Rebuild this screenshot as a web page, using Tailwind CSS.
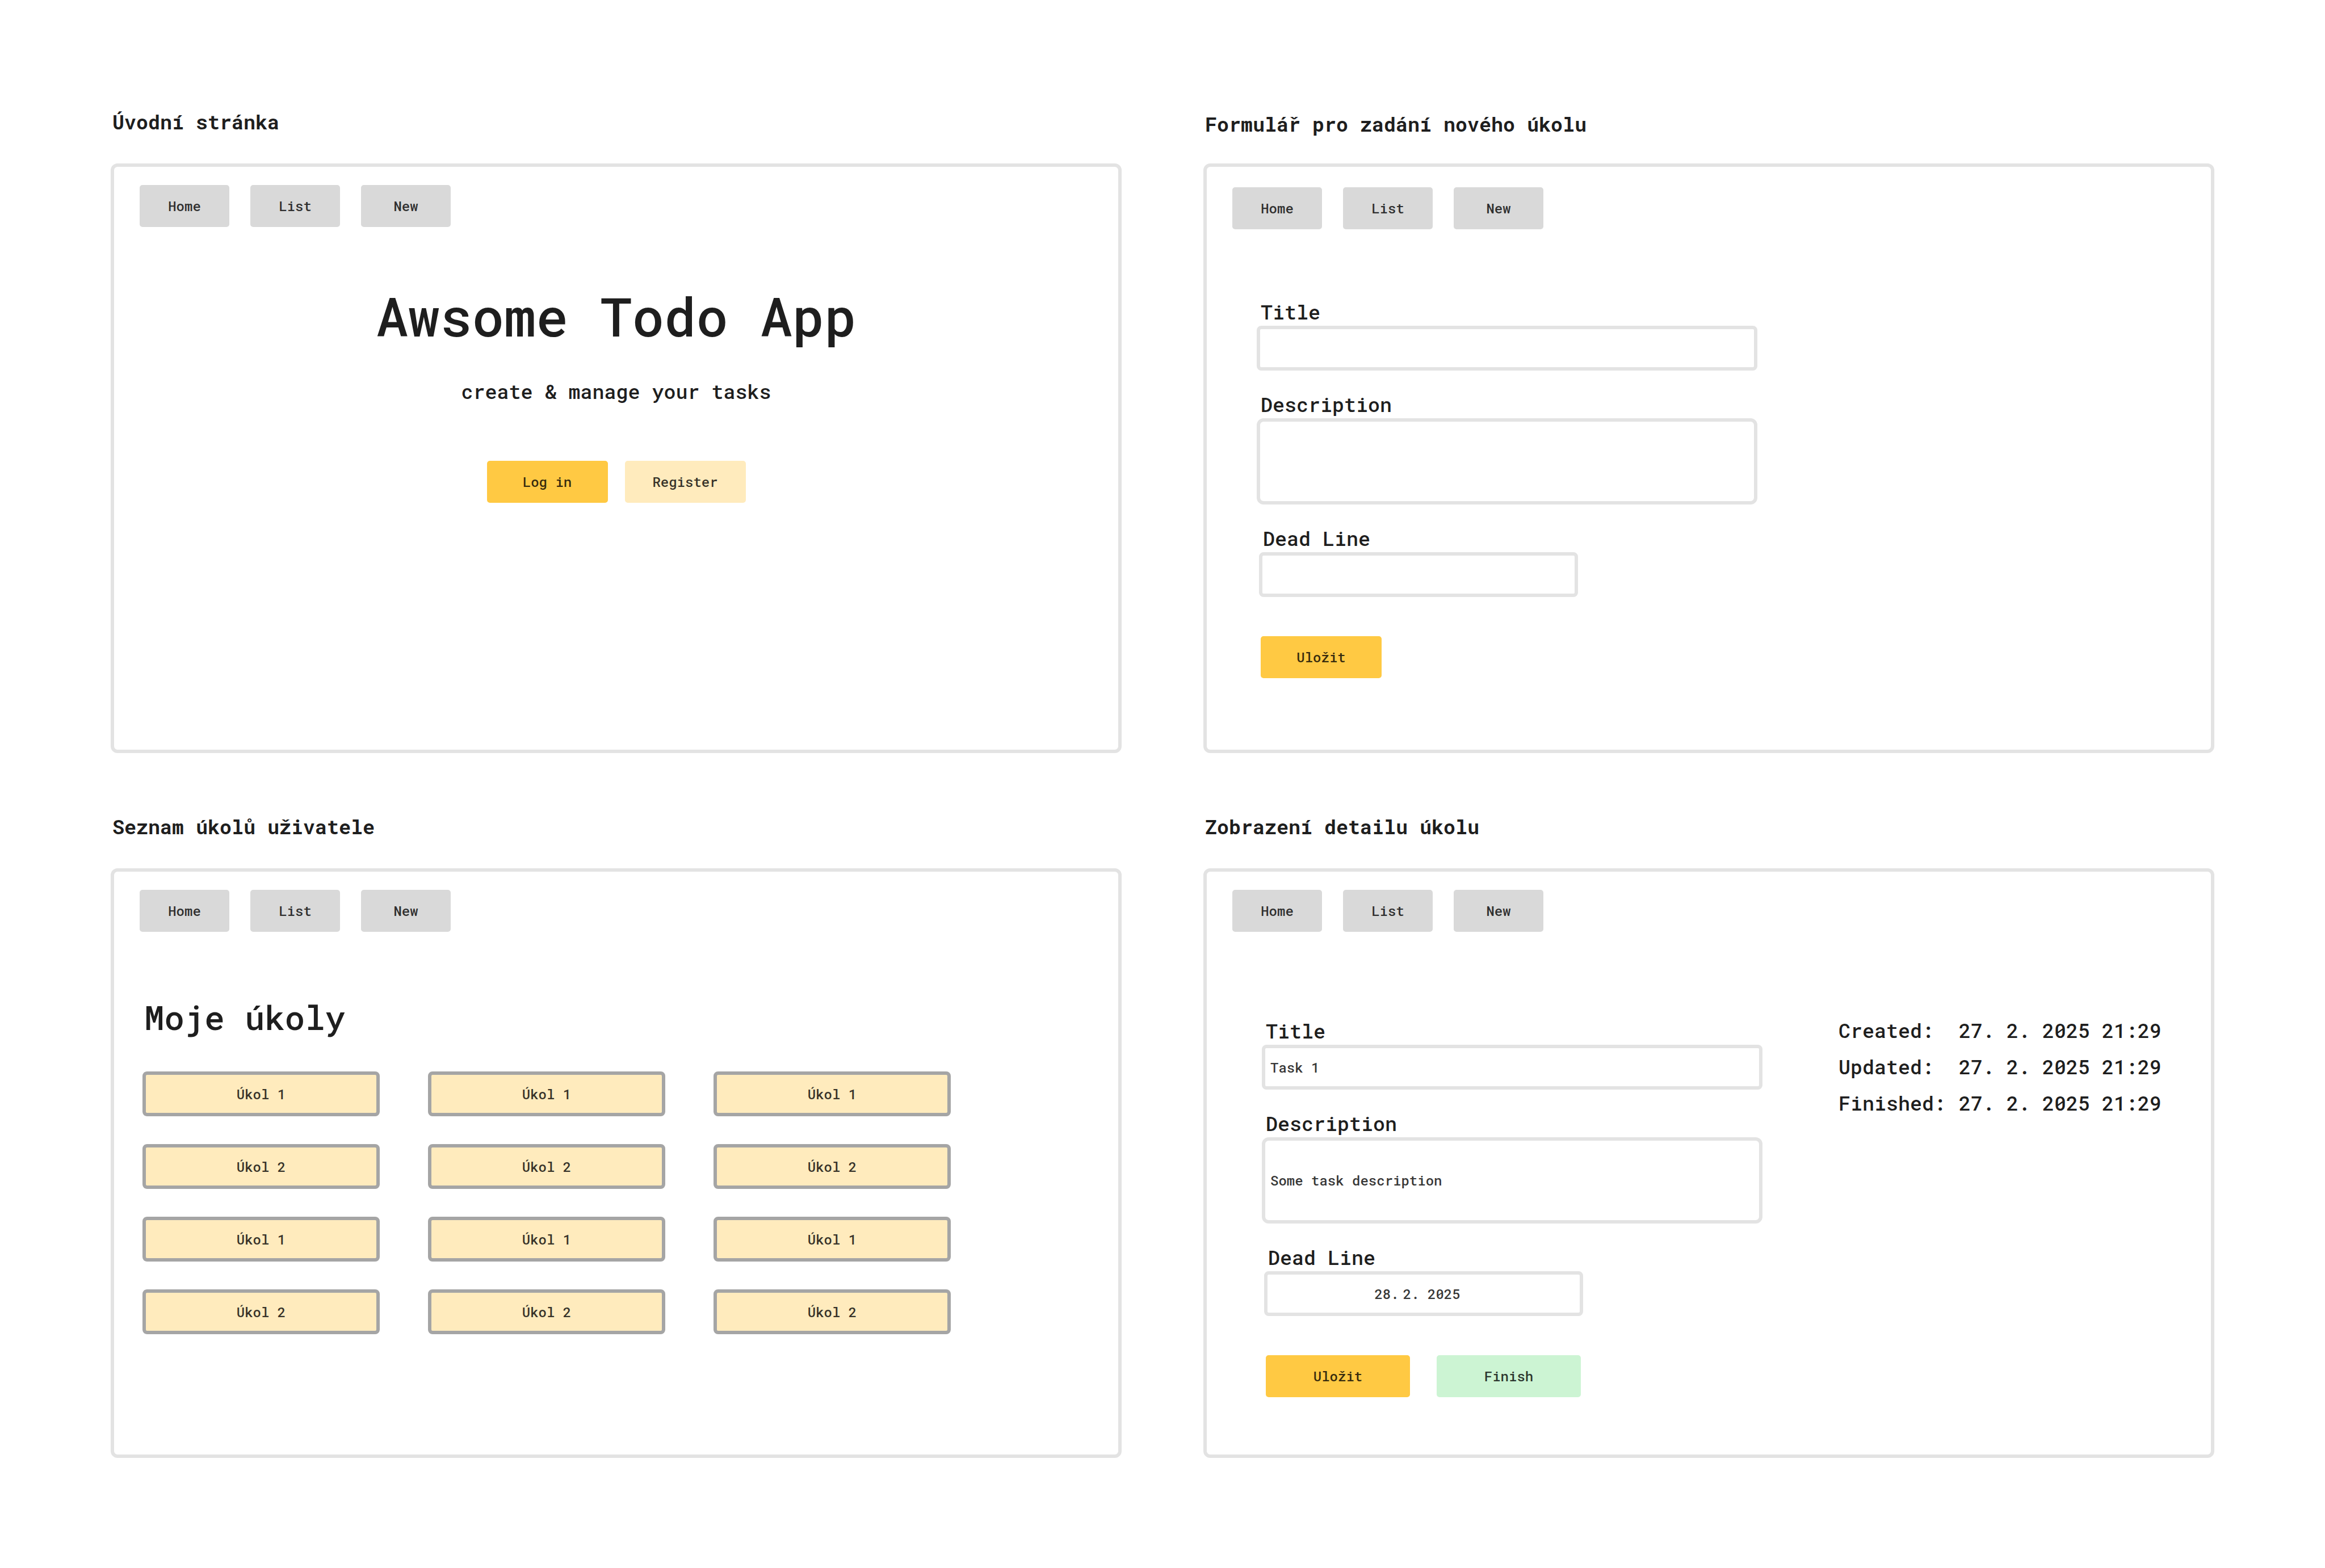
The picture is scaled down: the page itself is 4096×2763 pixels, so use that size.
<!DOCTYPE html>
<html lang="cs">
<head>
<meta charset="utf-8">
<meta name="viewport" content="width=device-width, initial-scale=1">
<title>Awsome Todo App</title>
<script src="https://cdn.jsdelivr.net/npm/@tailwindcss/browser@4"></script>
</head>
<body class="bg-white font-['Roboto_Mono','Noto_Sans',monospace] text-[35px] leading-11 font-medium text-[#1e1e1e]">
<main class="grid grid-cols-2 gap-x-36 gap-y-[105px] px-[195px] pt-[190px] pb-[190px]">

  <!-- Home page -->
  <section>
    <h2 class="mb-[50px] pl-[3px] leading-12 font-bold">Úvodní stránka</h2>
    <div class="min-h-[1039px] rounded-xl border-6 border-[#e3e3e3] px-[45px] pt-8">
      <nav class="flex gap-[37px] text-2xl text-black/80">
        <a href="#home" class="flex h-[74px] w-[158px] items-center justify-center rounded-[5px] bg-[#d9d9d9]">Home</a>
        <a href="#list" class="flex h-[74px] w-[158px] items-center justify-center rounded-[5px] bg-[#d9d9d9]">List</a>
        <a href="#new" class="flex h-[74px] w-[158px] items-center justify-center rounded-[5px] bg-[#d9d9d9]">New</a>
      </nav>
      <div class="flex flex-col items-center pt-[101px]">
        <h1 class="text-[94px] leading-[112px]">Awsome Todo App</h1>
        <p class="mt-[52px] leading-12">create &amp; manage your tasks</p>
        <div class="mt-[99px] flex gap-[30px] text-2xl text-black/80">
          <button type="button" class="h-[74px] w-[213px] rounded-[5px] bg-[#ffc943]">Log in</button>
          <button type="button" class="h-[74px] w-[213px] rounded-[5px] bg-[#ffebbd]">Register</button>
        </div>
      </div>
    </div>
  </section>

  <!-- New task form -->
  <section>
    <h2 class="mb-[46px] pt-1 pl-[3px] leading-12 font-bold">Formulář pro zadání nového úkolu</h2>
    <div class="min-h-[1039px] rounded-xl border-6 border-[#e3e3e3] px-[45px] pt-9">
      <nav class="flex gap-[37px] text-2xl text-black/80">
        <a href="#home" class="flex h-[74px] w-[158px] items-center justify-center rounded-[5px] bg-[#d9d9d9]">Home</a>
        <a href="#list" class="flex h-[74px] w-[158px] items-center justify-center rounded-[5px] bg-[#d9d9d9]">List</a>
        <a href="#new" class="flex h-[74px] w-[158px] items-center justify-center rounded-[5px] bg-[#d9d9d9]">New</a>
      </nav>
      <form class="ml-[43px] flex w-[882px] flex-col gap-[37px] pt-[123px]">
        <div class="flex flex-col gap-[3px]">
          <label for="new-title" class="pl-[7px]">Title</label>
          <input id="new-title" type="text" class="h-[79px] rounded-lg border-6 border-[#e3e3e3] px-[9px] text-2xl text-black/80">
        </div>
        <div class="flex flex-col gap-[3px]">
          <label for="new-description" class="pl-[7px]">Description</label>
          <textarea id="new-description" class="h-[152px] resize-none rounded-xl border-6 border-[#e3e3e3] px-[9px] pt-[54px] text-2xl text-black/80"></textarea>
        </div>
        <div class="ml-1 flex flex-col gap-[3px]">
          <label for="new-deadline" class="pl-[7px]">Dead Line</label>
          <input id="new-deadline" type="text" class="h-[79px] w-[562px] rounded-lg border-6 border-[#e3e3e3] px-[9px] text-2xl text-black/80">
        </div>
        <div class="mt-8 ml-[7px] flex text-2xl text-black/80">
          <button type="button" class="h-[74px] w-[213px] rounded-[5px] bg-[#ffc943]">Uložit</button>
        </div>
      </form>
    </div>
  </section>

  <!-- Task list -->
  <section>
    <h2 class="mb-[50px] pl-[3px] leading-12 font-bold">Seznam úkolů uživatele</h2>
    <div class="min-h-[1039px] rounded-xl border-6 border-[#e3e3e3] px-[45px] pt-8">
      <nav class="flex gap-[37px] text-2xl text-black/80">
        <a href="#home" class="flex h-[74px] w-[158px] items-center justify-center rounded-[5px] bg-[#d9d9d9]">Home</a>
        <a href="#list" class="flex h-[74px] w-[158px] items-center justify-center rounded-[5px] bg-[#d9d9d9]">List</a>
        <a href="#new" class="flex h-[74px] w-[158px] items-center justify-center rounded-[5px] bg-[#d9d9d9]">New</a>
      </nav>
      <h3 class="pt-[114px] pl-2 text-[59px] leading-[72px]">Moje úkoly</h3>
      <div class="mt-[60px] ml-[5px] grid w-[1424px] grid-cols-3 gap-x-[85px] gap-y-[49px] text-2xl text-black/80">
        <button type="button" class="h-[79px] rounded-lg border-6 border-[#a5a5a5] bg-[#ffebbd]">Úkol 1</button>
        <button type="button" class="h-[79px] rounded-lg border-6 border-[#a5a5a5] bg-[#ffebbd]">Úkol 1</button>
        <button type="button" class="h-[79px] rounded-lg border-6 border-[#a5a5a5] bg-[#ffebbd]">Úkol 1</button>
        <button type="button" class="h-[79px] rounded-lg border-6 border-[#a5a5a5] bg-[#ffebbd]">Úkol 2</button>
        <button type="button" class="h-[79px] rounded-lg border-6 border-[#a5a5a5] bg-[#ffebbd]">Úkol 2</button>
        <button type="button" class="h-[79px] rounded-lg border-6 border-[#a5a5a5] bg-[#ffebbd]">Úkol 2</button>
        <button type="button" class="h-[79px] rounded-lg border-6 border-[#a5a5a5] bg-[#ffebbd]">Úkol 1</button>
        <button type="button" class="h-[79px] rounded-lg border-6 border-[#a5a5a5] bg-[#ffebbd]">Úkol 1</button>
        <button type="button" class="h-[79px] rounded-lg border-6 border-[#a5a5a5] bg-[#ffebbd]">Úkol 1</button>
        <button type="button" class="h-[79px] rounded-lg border-6 border-[#a5a5a5] bg-[#ffebbd]">Úkol 2</button>
        <button type="button" class="h-[79px] rounded-lg border-6 border-[#a5a5a5] bg-[#ffebbd]">Úkol 2</button>
        <button type="button" class="h-[79px] rounded-lg border-6 border-[#a5a5a5] bg-[#ffebbd]">Úkol 2</button>
      </div>
    </div>
  </section>

  <!-- Task detail -->
  <section>
    <h2 class="mb-[50px] pl-[3px] leading-12 font-bold">Zobrazení detailu úkolu</h2>
    <div class="min-h-[1039px] rounded-xl border-6 border-[#e3e3e3] px-[45px] pt-8">
      <nav class="flex gap-[37px] text-2xl text-black/80">
        <a href="#home" class="flex h-[74px] w-[158px] items-center justify-center rounded-[5px] bg-[#d9d9d9]">Home</a>
        <a href="#list" class="flex h-[74px] w-[158px] items-center justify-center rounded-[5px] bg-[#d9d9d9]">List</a>
        <a href="#new" class="flex h-[74px] w-[158px] items-center justify-center rounded-[5px] bg-[#d9d9d9]">New</a>
      </nav>
      <div class="ml-[52px] flex items-start pt-[141px]">
        <form class="flex w-[882px] flex-col gap-[37px] pt-[11px]">
          <div class="flex flex-col gap-[3px]">
            <label for="task-title" class="pl-[7px]">Title</label>
            <input id="task-title" type="text" value="Task 1" class="h-[79px] rounded-lg border-6 border-[#e3e3e3] px-[9px] text-2xl text-black/80">
          </div>
          <div class="flex flex-col gap-[3px]">
            <label for="task-description" class="pl-[7px]">Description</label>
            <textarea id="task-description" class="h-[152px] resize-none rounded-xl border-6 border-[#e3e3e3] px-[9px] pt-[54px] text-2xl text-black/80">Some task description</textarea>
          </div>
          <div class="ml-1 flex flex-col gap-[3px]">
            <label for="task-deadline" class="pl-[7px]">Dead Line</label>
            <input id="task-deadline" type="text" value="28.&#8239;2. 2025" class="h-[79px] w-[562px] rounded-lg border-6 border-[#e3e3e3] pr-[22px] text-center text-2xl text-black/80">
          </div>
          <div class="mt-8 ml-[7px] flex gap-[47px] text-2xl text-black/80">
            <button type="button" class="h-[74px] w-[254px] rounded-[5px] bg-[#ffc943]">Uložit</button>
            <button type="button" class="h-[74px] w-[254px] rounded-[5px] bg-[#ccf4d3]">Finish</button>
          </div>
        </form>
        <dl class="ml-[134px] grid grid-cols-[212px_auto] leading-16 whitespace-nowrap">
          <dt>Created:</dt><dd>27. 2. 2025 21:29</dd>
          <dt>Updated:</dt><dd>27. 2. 2025 21:29</dd>
          <dt>Finished:</dt><dd>27. 2. 2025 21:29</dd>
        </dl>
      </div>
    </div>
  </section>

</main>
</body>
</html>
